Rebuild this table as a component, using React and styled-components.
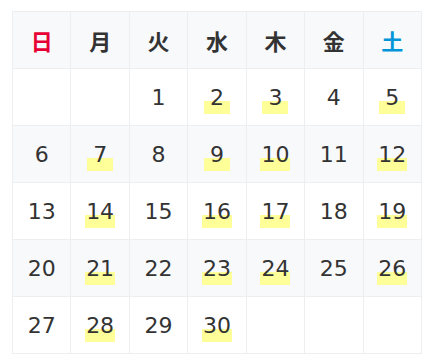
import React from "react";
import styled, { createGlobalStyle } from "styled-components";

const Global = createGlobalStyle`
  html, body { margin: 0; padding: 0; background: #fff; }
  body { font-family: "DejaVu Sans", "Noto Sans CJK JP", sans-serif; color: #333; }
`;

const Wrap = styled.div`
  padding: 11px 12px;
`;

const Table = styled.table`
  border-collapse: collapse;
  table-layout: fixed;
  width: 410px;
`;

const Row = styled.tr`
  background: ${(p) => (p.$striped ? "#f8f9fb" : "#fff")};
`;

const Head = styled.th`
  border: 1px solid #eceef0;
  height: 56px;
  padding: 0;
  text-align: center;
  vertical-align: middle;
  font-family: "Noto Sans CJK JP", sans-serif;
  font-weight: 700;
  font-size: 22px;
  color: ${(p) => (p.$tone === "sun" ? "#e60033" : p.$tone === "sat" ? "#0095d9" : "#333")};
`;

const Cell = styled.td`
  border: 1px solid #eceef0;
  height: 56px;
  padding: 0;
  text-align: center;
  vertical-align: middle;
  font-size: 22px;
  color: #333;
`;

const Num = styled.span`
  display: inline-block;
  line-height: 1.5;
  min-width: 1.1em;
  padding: 0 1px;
  text-align: center;
  background: ${(p) =>
    p.$mark ? "linear-gradient(transparent 60%, #ffff99 60%)" : "none"};
`;

const days = [
  { label: "日", tone: "sun" },
  { label: "月" },
  { label: "火" },
  { label: "水" },
  { label: "木" },
  { label: "金" },
  { label: "土", tone: "sat" },
];

const marked = new Set([2, 3, 5, 7, 9, 10, 12, 14, 16, 17, 19, 21, 23, 24, 26, 28, 30]);

const weeks = [
  [null, null, 1, 2, 3, 4, 5],
  [6, 7, 8, 9, 10, 11, 12],
  [13, 14, 15, 16, 17, 18, 19],
  [20, 21, 22, 23, 24, 25, 26],
  [27, 28, 29, 30, null, null, null],
];

export default function App() {
  return (
    <Wrap>
      <Global />
      <Table>
        <thead>
          <Row $striped>
            {days.map((d) => (
              <Head key={d.label} $tone={d.tone}>
                {d.label}
              </Head>
            ))}
          </Row>
        </thead>
        <tbody>
          {weeks.map((w, i) => (
            <Row key={i} $striped={i % 2 === 1}>
              {w.map((n, j) => (
                <Cell key={j}>
                  {n !== null && <Num $mark={marked.has(n)}>{n}</Num>}
                </Cell>
              ))}
            </Row>
          ))}
        </tbody>
      </Table>
    </Wrap>
  );
}
